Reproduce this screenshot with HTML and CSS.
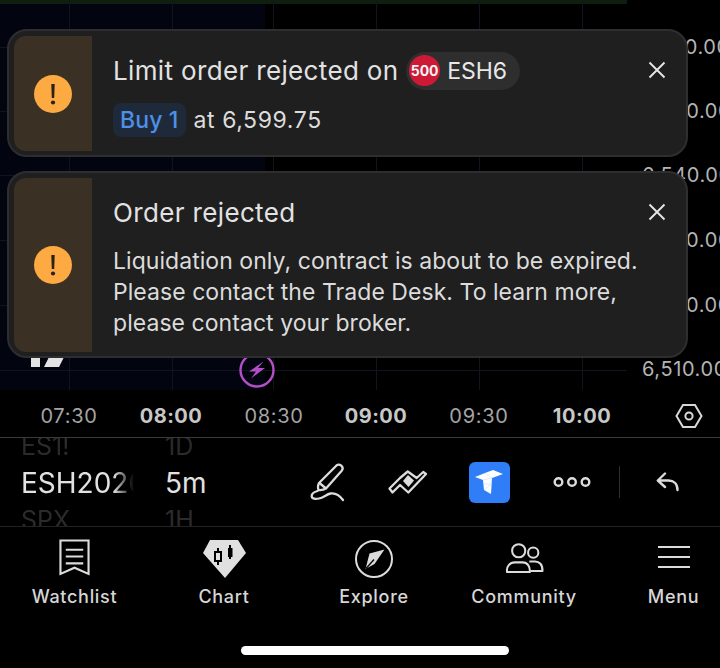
FILE: index.html
```html
<!DOCTYPE html>
<html lang="en">
<head>
<meta charset="utf-8">
<title>Order rejected</title>
<link rel="stylesheet" href="styles.css">
</head>
<body>
<div class="app">
  <section class="chart">
    <div class="session"></div>
    <div class="volume"></div>
    <i class="vline v1"></i><i class="vline v2"></i><i class="vline v3"></i><i class="vline v4"></i><i class="vline v5"></i><i class="vline v6"></i>
    <i class="hline h1"></i><i class="hline h2"></i><i class="hline h3"></i><i class="hline h4"></i><i class="hline h5"></i><i class="hline h6"></i>
    <span class="price p1">6,570.00</span>
    <span class="price p2">6,560.00</span>
    <span class="price p3">6,540.00</span>
    <span class="price p4">6,530.00</span>
    <span class="price p5">6,520.00</span>
    <span class="price p6">6,510.00</span>
    <svg class="tvlogo" viewBox="30 355 36 12"><path d="M31 355h9v12h-9zM50 355h15l-6 12H44z" fill="#e4e4e4"/></svg>
    <svg class="bolt" viewBox="0 0 38 38"><circle cx="19" cy="19" r="16.5" fill="none" stroke="#b44fc8" stroke-width="2.4"/><path d="M25.500 10.500 11 20.500H18L13 27.500 27 17H20z" fill="#b44fc8"/></svg>
    <div class="toasts">
      <article class="toast">
        <div class="stripe"><svg class="warn" viewBox="0 0 38 38"><circle cx="19" cy="19" r="19" fill="#fdaa43"/><path d="M17.300 9h3.400l-.5 14h-2.400z" fill="#2a2218"/><circle cx="19" cy="27.500" r="2.100" fill="#2a2218"/></svg></div>
        <div class="toast-body">
          <h2 class="title">Limit order rejected on <span class="chip"><span class="badge">500</span><span class="chip-name">ESH6</span></span></h2>
          <p class="line"><span class="buy">Buy 1</span> at 6,599.75</p>
        </div>
        <svg class="close" viewBox="0 0 18 18"><path d="M1.500 1.500l15 15M16.500 1.500l-15 15" stroke="#e6e6e6" stroke-width="1.900" fill="none"/></svg>
      </article>
      <article class="toast">
        <div class="stripe"><svg class="warn" viewBox="0 0 38 38"><circle cx="19" cy="19" r="19" fill="#fdaa43"/><path d="M17.300 9h3.400l-.5 14h-2.400z" fill="#2a2218"/><circle cx="19" cy="27.500" r="2.100" fill="#2a2218"/></svg></div>
        <div class="toast-body">
          <h2 class="title">Order rejected</h2>
          <p class="message">Liquidation only, contract is about to be expired. Please contact the Trade Desk. To learn more, please contact your broker.</p>
        </div>
        <svg class="close" viewBox="0 0 18 18"><path d="M1.500 1.500l15 15M16.500 1.500l-15 15" stroke="#e6e6e6" stroke-width="1.900" fill="none"/></svg>
      </article>
    </div>
  </section>

  <div class="axis">
    <span class="tick t1">07:30</span><span class="tick t2 major">08:00</span><span class="tick t3">08:30</span><span class="tick t4 major">09:00</span><span class="tick t5">09:30</span><span class="tick t6 major">10:00</span>
    <svg class="hex" viewBox="0 0 28 26"><path d="M8 2h12l6.500 11L20 24H8L1.500 13z" fill="none" stroke="#d8d8d8" stroke-width="2"/><circle cx="14" cy="13" r="3.600" fill="none" stroke="#d8d8d8" stroke-width="2"/></svg>
  </div>

  <div class="toolbar">
    <div class="wheel symbol">
      <span class="ghost">ES1!</span><span class="current">ESH2026</span><span class="ghost">SPX</span>
    </div>
    <div class="wheel interval">
      <span class="ghost">1D</span><span class="current">5m</span><span class="ghost">1H</span>
    </div>
    <div class="tools">
      <svg class="tool pen" viewBox="309 462 36 40"><path d="M319 483 336.500 465.500c1.500-1.200 3.300-1 4.800.2 1.500 1.400 1.700 3.400.4 5L326 488.500c-2 1.200-5 1.800-7.500 1.500-.8-2.500-.5-5 .5-7zM319.500 483l6.500 5.500" fill="none" stroke="#dcdcdc" stroke-width="2.300" stroke-linejoin="round"/><path d="M343 500c-3-4-7-7.500-12.500-6.500-4 .8-7 4-11.500 5-3.500.8-7 .5-7.300-2-.3-2.500 2.300-4.500 5.800-5.500" fill="none" stroke="#dcdcdc" stroke-width="2.300" stroke-linecap="round"/></svg>
      <svg class="tool lines" viewBox="388 470 40 24"><path d="M389.500 488.500 400 478l7.700-6.500 9 6.500 6.500-6 2.800 2-9.300 9.800-8.400 8.700-8.300-7.500-7.500 7.500z" fill="none" stroke="#dcdcdc" stroke-width="2.300" stroke-linejoin="round"/><path d="M403 481 408 475 414 480.500 408.500 487z" fill="#dcdcdc"/></svg>
      <div class="brand"><svg viewBox="469 462 41 41"><path d="M475 477 485 473 493 470 503 474 492 478 491 494 484 490 483 480z" fill="#fff"/><path d="M485 473 492 478M483 480 492 478M484 490 491.500 484M483.500 484 491.500 484" stroke="#c6dcfc" stroke-width=".6"/></svg></div>
      <svg class="tool dots" viewBox="0 0 38 12"><circle cx="5.500" cy="6" r="3.800"/><circle cx="19" cy="6" r="3.800"/><circle cx="32.500" cy="6" r="3.800"/></svg>
      <i class="tool-sep"></i>
      <svg class="tool undo" viewBox="0 0 24 20"><path d="M9 1.500 1.800 8.500 9 15M2.500 8.500h10c5 0 9 3 9 9.500" fill="none" stroke="#dcdcdc" stroke-width="2.400" stroke-linejoin="round" stroke-linecap="round"/></svg>
    </div>
  </div>

  <nav class="tabs">
    <a class="tab">
      <svg class="tab-icon watch" viewBox="0 0 32 38"><path d="M1.500 1.500h29v34.500L16 29.500 1.500 36z" fill="none" stroke="#dcdcdc" stroke-width="2.200"/><path d="M7 11h18M7 18h18M7 25h18" stroke="#dcdcdc" stroke-width="2.200"/></svg>
      <span>Watchlist</span>
    </a>
    <a class="tab">
      <svg class="tab-icon candles" viewBox="204 540 43 38"><path d="M211 540h28l8 13-21 25-22-25z" fill="#e0e0e0"/><path d="M219 548v17M231 545v14" stroke="#000" stroke-width="2"/><rect x="216" y="552" width="6" height="9" fill="#e0e0e0" stroke="#000" stroke-width="2"/><rect x="229" y="548" width="4.500" height="9" fill="#000"/></svg>
      <span>Chart</span>
    </a>
    <a class="tab">
      <svg class="tab-icon compass" viewBox="356 540 38 38"><circle cx="375" cy="559" r="18" fill="none" stroke="#dcdcdc" stroke-width="2"/><path d="M385.500 549.500 375.500 564 366.500 569 370.500 553.500z" fill="#dcdcdc"/><path d="M367 568.500 375 559.500" stroke="#000" stroke-width="1.300"/></svg>
      <span>Explore</span>
    </a>
    <a class="tab">
      <svg class="tab-icon people" viewBox="0 0 40 32"><circle cx="14" cy="8" r="6.800" fill="none" stroke="#dcdcdc" stroke-width="2.100"/><circle cx="29" cy="10" r="5.300" fill="none" stroke="#dcdcdc" stroke-width="2.100"/><path d="M2 30c-1-6 3-10 8-10h8c5 0 8 4 7.500 10z" fill="none" stroke="#dcdcdc" stroke-width="2.100" stroke-linejoin="round"/><path d="M25 19h6c4 0 8 3 7.500 10H26" fill="none" stroke="#dcdcdc" stroke-width="2.100" stroke-linejoin="round"/></svg>
      <span>Community</span>
    </a>
    <a class="tab">
      <svg class="tab-icon burger" viewBox="0 0 32 24"><path d="M0 2h32M0 12h32M0 22h32" stroke="#dcdcdc" stroke-width="2.200"/></svg>
      <span>Menu</span>
    </a>
  </nav>
  <div class="home-bar"></div>
</div>
</body>
</html>
```

FILE: styles.css
```css
* { box-sizing: border-box; }
html, body { margin: 0; padding: 0; background: #000; }
body { font-family: Inter, "Liberation Sans", sans-serif; color: #dcdcdc; }

.app { width: 720px; height: 668px; overflow: hidden; display: flex; flex-direction: column; background: #000; position: relative; }

.chart { height: 390px; position: relative; overflow: hidden; background: #000; flex: none; }
.session { position: absolute; left: 0; top: 0; width: 265px; height: 100%; background: #02040f; }
.volume { position: absolute; left: 0; top: 0; width: 627px; height: 4px; background: #0e1f10; }
.vline { position: absolute; top: 0; bottom: 0; width: 1px; background: #11141c; }
.v1 { left: 69px; } .v2 { left: 172px; } .v3 { left: 273px; } .v4 { left: 376px; } .v5 { left: 479px; } .v6 { left: 582px; }
.hline { position: absolute; left: 0; width: 627px; height: 1px; background: #11141c; }
.h1 { top: 47px; } .h2 { top: 111px; } .h3 { top: 175px; } .h4 { top: 240px; } .h5 { top: 305px; } .h6 { top: 370px; }
.price { position: absolute; left: 642px; font-size: 20px; line-height: 24px; color: #b4b4b4; letter-spacing: .6px; white-space: nowrap; }
.p1 { top: 35px; } .p2 { top: 99px; } .p3 { top: 163px; } .p4 { top: 228px; } .p5 { top: 293px; } .p6 { top: 357px; }
.tvlogo { position: absolute; left: 30px; top: 355px; width: 36px; height: 12px; }
.bolt { position: absolute; left: 238px; top: 351px; width: 38px; height: 38px; }

.toasts { position: absolute; left: 7px; top: 29px; width: 681px; display: flex; flex-direction: column; gap: 14px; }
.toast { position: relative; display: flex; background: #1f1f1f; border: 2px solid #2e2e30; border-radius: 20px; padding: 5px 5px 4px; }
.stripe { flex: none; width: 78px; border-radius: 12px 0 0 12px; background: #3a3023; display: flex; align-items: center; justify-content: center; }
.warn { width: 38px; height: 38px; display: block; }
.toast-body { padding: 17.5px 0 14.500px 21px; }
.title { margin: 0; font-size: 26px; line-height: 34px; font-weight: 400; letter-spacing: .35px; color: #e2e2e2; display: flex; align-items: center; white-space: pre; }
.chip { display: inline-flex; align-items: center; height: 38px; margin: -2px 0; padding: 0 13px 0 3px; background: #2e2e2e; border-radius: 19px; gap: 7px; letter-spacing: 0; }
.badge { width: 31px; height: 31px; border-radius: 50%; background: #cc1a36; color: #f2f2f2; font-size: 14px; font-weight: 700; line-height: 31px; text-align: center; }
.chip-name { font-size: 23px; color: #e8e8e8; }
.line { margin: 15px 0 0; font-size: 23px; line-height: 34px; color: #dcdcdc; letter-spacing: .6px; }
.buy { display: inline-block; padding: 0 8px 0 7px; background: #1e2a3a; border-radius: 8px; color: #4f8fe6; font-weight: 500; letter-spacing: .1px; }
.message { margin: 16px 0 -1px; width: 540px; font-size: 23px; line-height: 31px; letter-spacing: .05px; color: #dcdcdc; }
.close { position: absolute; right: 20px; top: 29.500px; width: 18px; height: 18px; }

.axis { height: 48px; flex: none; position: relative; border-bottom: 1px solid #3a3a3a; }
.tick { position: absolute; top: 14px; font-size: 20px; line-height: 24px; width: 80px; text-align: center; color: #a4a4a4; letter-spacing: .7px; }
.tick.major { font-weight: 700; color: #c8c8c8; letter-spacing: .5px; }
.t1 { left: 29px; } .t2 { left: 131px; } .t3 { left: 234px; } .t4 { left: 336px; } .t5 { left: 439px; } .t6 { left: 542px; }
.hex { position: absolute; left: 675px; top: 13px; width: 28px; height: 26px; }

.toolbar { height: 89px; flex: none; display: flex; align-items: center; border-bottom: 1px solid #222; position: relative; overflow: hidden; }
.wheel { display: flex; flex-direction: column; justify-content: center; align-items: flex-start; height: 100%; padding-top: 2px; white-space: nowrap; overflow: hidden; gap: 5.500px; flex: none; }
.wheel .ghost { font-size: 25px; line-height: 26px; color: #2b2b2b; flex: none; }
.wheel .current { font-size: 28px; line-height: 37px; color: #e2e2e2; flex: none; }
.symbol { width: 113px; margin-left: 21px; -webkit-mask-image: linear-gradient(90deg, #000 82%, transparent 100%); mask-image: linear-gradient(90deg, #000 82%, transparent 100%); }
.interval { width: 100px; margin-left: 31px; }
.tools { display: flex; align-items: center; position: absolute; left: 309px; top: 0; height: 100%; }
.pen { width: 36px; height: 40px; margin-right: 43px; flex: none; }
.lines { width: 40px; height: 24px; margin-right: 41px; flex: none; }
.brand { width: 41px; height: 41px; border-radius: 6px; background: #2f7ef7; margin-right: 43px; flex: none; }
.brand svg { width: 41px; height: 41px; display: block; }
.dots { width: 38px; height: 12px; margin-right: 28px; fill: none; stroke: #dcdcdc; stroke-width: 2.400; flex: none; }
.tool-sep { width: 1px; height: 32px; background: #2e2e2e; margin-right: 36px; flex: none; }
.undo { width: 24px; height: 20px; flex: none; }

.tabs { display: flex; height: 89px; flex: none; padding-top: 10px; }
.tab { flex: none; display: flex; flex-direction: column; align-items: center; font-size: 18px; font-weight: 500; letter-spacing: .7px; color: #d6d6d6; position: relative; height: 79px; }
.tab span { position: absolute; top: 49px; line-height: 22px; white-space: nowrap; left: 50%; transform: translateX(-50%); }
.tab-icon { display: block; flex: none; }
.tab:nth-child(1) { width: 149px; } .tab:nth-child(2) { width: 150px; } .tab:nth-child(3) { width: 150px; } .tab:nth-child(4) { width: 150px; } .tab:nth-child(5) { width: 149px; }
.watch { width: 31px; height: 37px; margin-top: 2px; }
.candles { width: 43px; height: 38px; margin-top: 3px; }
.compass { width: 38px; height: 38px; margin-top: 3px; }
.people { width: 39px; height: 31px; margin-top: 6px; }
.burger { width: 32px; height: 24px; margin-top: 8px; }

.home-bar { width: 268px; height: 9px; margin: 30px 0 0 241px; border-radius: 5px; background: #fff; flex: none; }
```
